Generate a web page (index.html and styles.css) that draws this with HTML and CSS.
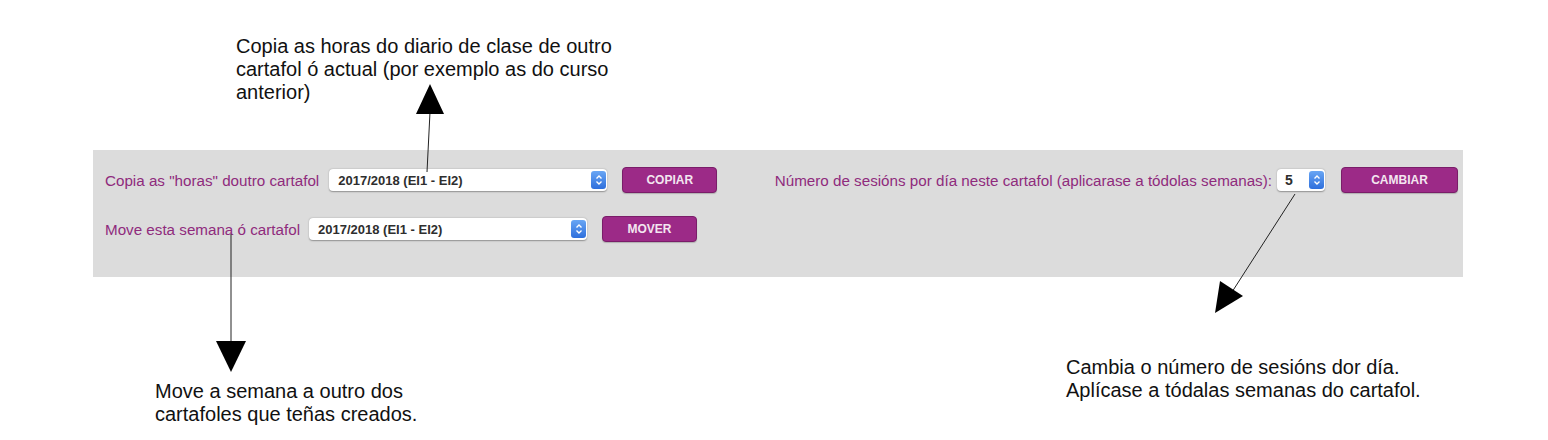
FILE: index.html
```html
<!DOCTYPE html>
<html lang="gl">
<head>
<meta charset="utf-8">
<title>Cartafol</title>
<link rel="stylesheet" href="styles.css">
</head>
<body>
<div class="canvas">
  <div class="panel">
    <div class="left">
      <div class="row row-copy">
        <span class="label">Copia as "horas" doutro cartafol</span>
        <span class="select wide"><span class="val">2017/2018 (EI1 - EI2)</span><span class="stepper"><svg width="8" height="12" viewBox="0 0 8 12"><path d="M1.5 4.5 L4 2 L6.5 4.5 M1.5 7.5 L4 10 L6.5 7.5" fill="none" stroke="#fff" stroke-width="1.4"/></svg></span></span>
        <span class="btn btn-copy">COPIAR</span>
      </div>
      <div class="row row-move">
        <span class="label">Move esta semana ó cartafol</span>
        <span class="select wide"><span class="val">2017/2018 (EI1 - EI2)</span><span class="stepper"><svg width="8" height="12" viewBox="0 0 8 12"><path d="M1.5 4.5 L4 2 L6.5 4.5 M1.5 7.5 L4 10 L6.5 7.5" fill="none" stroke="#fff" stroke-width="1.4"/></svg></span></span>
        <span class="btn btn-move">MOVER</span>
      </div>
    </div>
    <div class="right">
      <div class="row">
        <span class="label">Número de sesións por día neste cartafol (aplicarase a tódolas semanas):</span>
        <span class="select small"><span class="val">5</span><span class="stepper"><svg width="8" height="12" viewBox="0 0 8 12"><path d="M1.5 4.5 L4 2 L6.5 4.5 M1.5 7.5 L4 10 L6.5 7.5" fill="none" stroke="#fff" stroke-width="1.4"/></svg></span></span>
        <span class="btn btn-change">CAMBIAR</span>
      </div>
    </div>
  </div>

  <p class="note note-top">Copia as horas do diario de clase de outro<br>cartafol ó actual (por exemplo as do curso<br>anterior)</p>
  <p class="note note-left">Move a semana a outro dos<br>cartafoles que teñas creados.</p>
  <p class="note note-right">Cambia o número de sesións dor día.<br>Aplícase a tódalas semanas do cartafol.</p>

  <svg class="arrows" width="1548" height="440" viewBox="0 0 1548 440">
    <line x1="430" y1="112" x2="427" y2="172" stroke="#222" stroke-width="1"/>
    <polygon points="430,84 416,114 444,114" fill="#000"/>
    <line x1="231" y1="234" x2="231" y2="342" stroke="#222" stroke-width="1"/>
    <polygon points="216,341 246,341 231,372" fill="#000"/>
    <line x1="1295" y1="194" x2="1232" y2="292" stroke="#222" stroke-width="1"/>
    <polygon points="1215,313 1243,296 1220,281" fill="#000"/>
  </svg>
</div>
</body>
</html>
```
FILE: styles.css
```css
html, body {
  margin: 0;
  padding: 0;
  background: #fff;
}
.canvas {
  position: relative;
  width: 1548px;
  height: 440px;
  padding: 150px 0 0 93px;
  box-sizing: border-box;
  font-family: "Liberation Sans", Arial, Helvetica, sans-serif;
}
.panel {
  width: 1370px;
  height: 127px;
  background: #dcdcdc;
  display: flex;
  justify-content: space-between;
  box-sizing: border-box;
  padding: 17px 5px 0 12px;
}
.left {
  display: flex;
  flex-direction: column;
  gap: 23px;
}
.row {
  display: flex;
  align-items: center;
  height: 26px;
}
.label {
  color: #8f2b7c;
  font-size: 15.2px;
}
.select {
  position: relative;
  display: flex;
  align-items: center;
  height: 22px;
  background: #fff;
  border-radius: 4px;
  box-shadow: 0 0.5px 1.5px rgba(0,0,0,0.35);
  box-sizing: border-box;
  padding: 0 20px 0 9px;
  color: #2e2e2e;
  font-size: 13px;
  font-weight: bold;
}
.select.wide { width: 278px; }
.row-copy .select { margin-left: 10px; }
.row-move .select { margin-left: 9px; }
.select.small {
  width: 48px;
  margin-left: 5px;
  padding-left: 8px;
  font-size: 14px;
}
.stepper {
  position: absolute;
  right: 1px;
  top: 2px;
  width: 15px;
  height: 18px;
  border-radius: 3px;
  background: linear-gradient(#69a6f4, #2e6fdc);
  display: flex;
  align-items: center;
  justify-content: center;
}
.btn {
  display: flex;
  align-items: center;
  justify-content: center;
  height: 26px;
  box-sizing: border-box;
  background: #9c2a87;
  border: 1px solid #7a1d69;
  border-radius: 4px;
  color: #f3e6f0;
  font-size: 12px;
  font-weight: bold;
  margin-left: 15px;
  box-shadow: 0 1px 1px rgba(0,0,0,0.2);
}
.btn-copy, .btn-move { width: 95px; }
.btn-change { width: 117px; margin-left: 16px; }
.note {
  position: absolute;
  margin: 0;
  font-size: 20px;
  line-height: 23px;
  color: #111;
}
.note-top { left: 236px; top: 35px; }
.note-left { left: 155px; top: 380px; }
.note-right { left: 1066px; top: 356px; }
.arrows {
  position: absolute;
  left: 0;
  top: 0;
  pointer-events: none;
}
```
